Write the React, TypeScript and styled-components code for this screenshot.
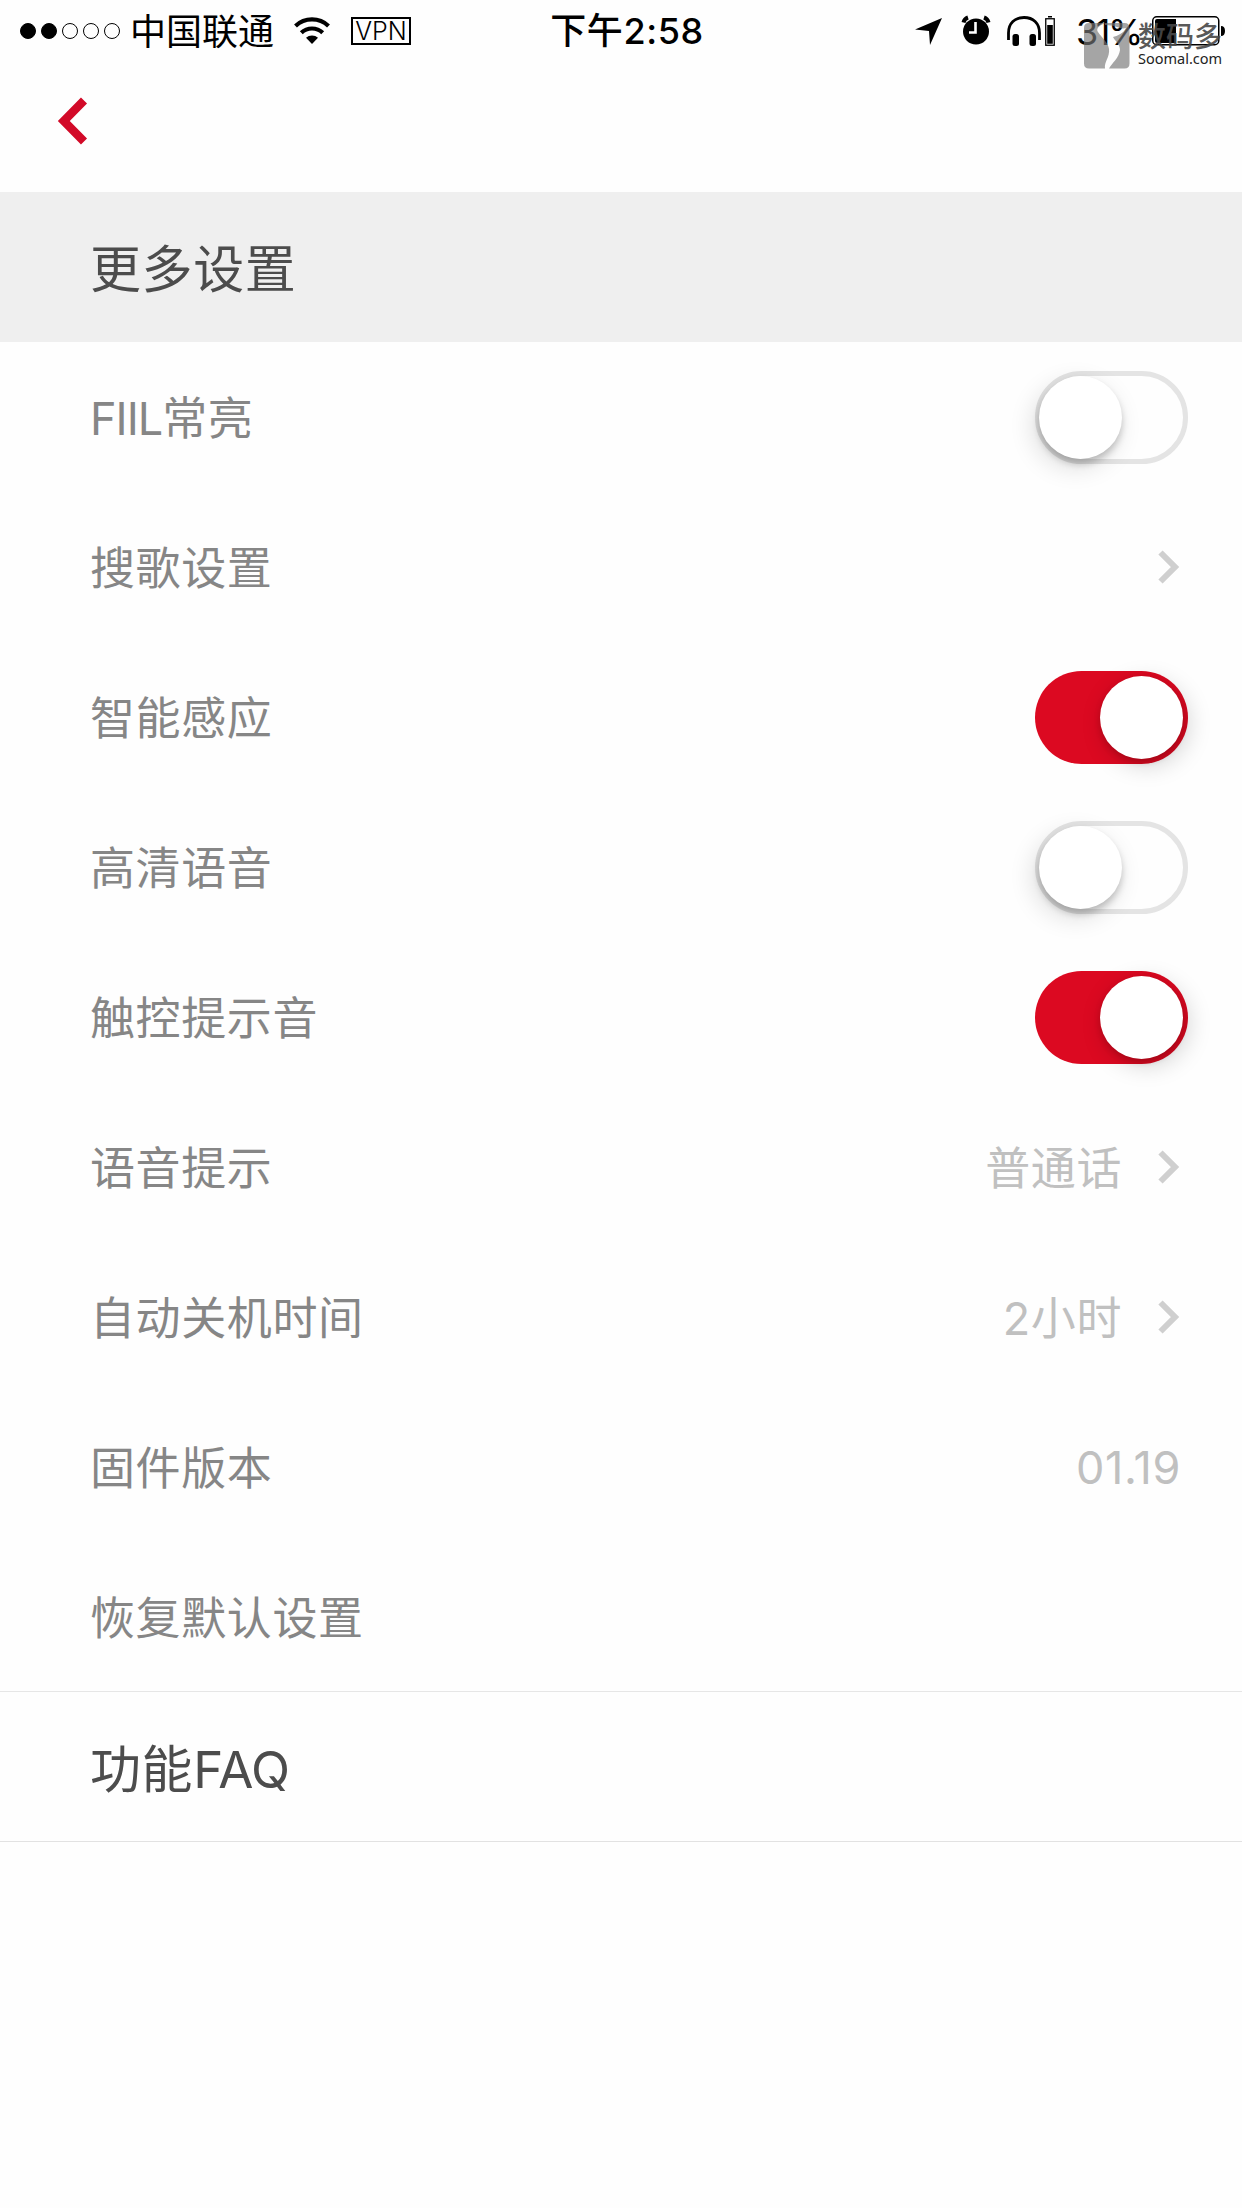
import React from "react";
import styled, { createGlobalStyle, css } from "styled-components";

const Global = createGlobalStyle`
  *, *::before, *::after { box-sizing: border-box; }
  body {
    margin: 0;
    background: #fefefe;
    font-family: Inter, "Noto Sans CJK SC", sans-serif;
  }
`;

const Page = styled.div`
  position: relative;
  width: 1242px;
  min-height: 2208px;
  background: #fefefe;
  overflow: hidden;
`;

const StatusBar = styled.header`
  display: grid;
  grid-template-columns: 531px 1fr 531px;
  align-items: center;
  height: 60px;
  color: #000;
  font-size: 36px;
  line-height: 60px;
  white-space: nowrap;
`;

const StatusGroup = styled.div<{ $end?: boolean }>`
  display: flex;
  align-items: center;
  height: 60px;
  ${(p) =>
    p.$end
      ? css`
          justify-content: flex-end;
          padding-right: 17px;
        `
      : css`
          padding-left: 20px;
        `}
`;

const Signal = styled.div`
  display: flex;
  gap: 5px;
  margin-right: 10px;
`;

const Dot = styled.i<{ $on: boolean }>`
  width: 16px;
  height: 16px;
  border-radius: 50%;
  border: 1px solid #000;
  background: ${(p) => (p.$on ? "#000" : "transparent")};
`;

const Carrier = styled.span`
  width: 164px;
  padding-top: 2px;
`;

const Vpn = styled.span`
  display: flex;
  align-items: center;
  justify-content: center;
  width: 60px;
  height: 28px;
  margin-left: 21px;
  border: 2px solid #000;
  font-size: 25px;
  font-weight: 300;
  line-height: 24px;
`;

const Clock = styled.time`
  padding: 1px 0 0 12px;
  text-align: center;
  font-weight: 500;
  letter-spacing: 0.6px;
`;

const Percent = styled.span`
  width: 76px;
  margin-left: 19px;
  padding-top: 2px;
  letter-spacing: -2.4px;
`;

const NavBar = styled.nav`
  display: flex;
  align-items: center;
  height: 132px;
  padding: 0 0 10px 55px;
`;

const BackButton = styled.button`
  display: flex;
  padding: 0;
  border: 0;
  background: none;
`;

const TitleBar = styled.h1`
  display: flex;
  align-items: center;
  height: 150px;
  margin: 0;
  padding: 0 0 3px 90px;
  background: #efefef;
  color: #4c4c4c;
  font-size: 51px;
  font-weight: 400;
  letter-spacing: 0.6px;
`;

const List = styled.ul`
  margin: 0;
  padding: 0;
  list-style: none;
`;

const Row = styled.li<{ $toggle?: boolean }>`
  display: flex;
  align-items: center;
  height: 150px;
  padding: 0 ${(p) => (p.$toggle ? 54 : 62)}px 0 90px;
  color: #868686;
  font-size: 45px;
  letter-spacing: 0.6px;
`;

const Label = styled.span`
  flex: 1;
  padding-bottom: 4px;
`;

const Latin = styled.span<{ $tight: number }>`
  letter-spacing: -${(p) => p.$tight}px;
`;

const Value = styled.span<{ $plain?: boolean }>`
  margin-right: ${(p) => (p.$plain ? -1 : 0)}px;
  padding-bottom: ${(p) => (p.$plain ? 0 : 4)}px;
  color: #c0c0c0;
`;

const FaqRow = styled.div`
  display: flex;
  align-items: center;
  height: 151px;
  margin-top: -1px;
  padding: 0 0 2px 90px;
  border-top: 1px solid #e6e6e6;
  border-bottom: 1px solid #e2e2e2;
  color: #4c4c4c;
  font-size: 51px;
  letter-spacing: 0.6px;
`;

const Track = styled.button<{ $on: boolean }>`
  display: flex;
  align-items: center;
  justify-content: ${(p) => (p.$on ? "flex-end" : "flex-start")};
  width: 153px;
  height: 93px;
  padding: 0;
  border: 5px solid ${(p) => (p.$on ? "transparent" : "#e4e4e4")};
  border-radius: 47px;
  background: ${(p) => (p.$on ? "#dc0921" : "#fefefe")};
  background-origin: border-box;
`;

const Knob = styled.span<{ $on: boolean }>`
  width: 83px;
  height: 83px;
  margin-left: ${(p) => (p.$on ? 0 : -1)}px;
  border-radius: 50%;
  background: #fff;
  box-shadow: ${(p) =>
    p.$on
      ? "5px 6px 24px rgba(0,0,0,.18), 0 3px 6px rgba(60,0,0,.2)"
      : "-5px 8px 26px rgba(0,0,0,.14), 0 5px 7px rgba(0,0,0,.2)"};
`;

const ChevronIcon = styled.svg`
  display: block;
  margin-left: 36px;
`;

const Watermark = styled.div`
  position: absolute;
  top: 20px;
  left: 1084px;
  display: flex;
  gap: 8px;
`;

const WatermarkText = styled.div`
  display: flex;
  flex-direction: column;
  white-space: nowrap;
`;

const WatermarkName = styled.span`
  height: 30px;
  color: rgba(72, 72, 72, 0.92);
  font-size: 28px;
  font-weight: 500;
  line-height: 35px;
`;

const WatermarkSite = styled.span`
  color: #222;
  font-family: "Noto Sans", sans-serif;
  font-size: 14.5px;
  line-height: 17px;
`;

const Chevron = () => (
  <ChevronIcon width="22" height="34" viewBox="0 0 22 34">
    <path d="M2.5 2.5L17 17L2.5 31.5" fill="none" stroke="#cfcfcf" strokeWidth="6" />
  </ChevronIcon>
);

const Toggle = ({ on }: { on: boolean }) => (
  <Track $on={on} role="switch" aria-checked={on}>
    <Knob $on={on} />
  </Track>
);

const WifiIcon = () => (
  <svg width="36" height="29" viewBox="0 0 36 29">
    <g fill="none" stroke="#000" strokeWidth="4.200">
      <path d="M1.5 10a24 24 0 0 1 33 0" />
      <path d="M7.3 16.800a15.500 15.500 0 0 1 21.4 0" />
    </g>
    <path d="M18 28l-6-6.200a8.700 8.700 0 0 1 12 0z" />
  </svg>
);

const StatusIcons = () => (
  <svg width="142" height="32" viewBox="0 0 142 32">
    <path d="M27 3L15 30L14 16L0 14.500z" />
    <circle cx="61" cy="16.500" r="13" />
    <path
      d="M48.500 7.500a7 7 0 0 1 4.500-5M73.500 7.500a7 7 0 0 0-4.500-5"
      fill="none"
      stroke="#000"
      strokeWidth="4"
    />
    <path d="M60.500 7v10.500h-6.500" fill="none" stroke="#fff" strokeWidth="2.600" />
    <path
      d="M93.500 25V18C93.500 8 100 2.500 109 2.500S124.500 8 124.500 18V25"
      fill="none"
      stroke="#000"
      strokeWidth="2.800"
    />
    <rect x="97.500" y="19" width="6.500" height="12" rx="2.500" />
    <rect x="114.500" y="19" width="6.500" height="12" rx="2.500" />
    <path d="M133 1h4v1.500h-4z" />
    <rect x="130.750" y="3.750" width="8.500" height="26.500" fill="none" stroke="#000" strokeWidth="1.300" />
    <path d="M132.200 10h5.600v18.800h-5.600z" />
  </svg>
);

const BatteryIcon = () => (
  <svg width="73" height="30" viewBox="0 0 73 30">
    <rect x="0.75" y="0.75" width="66" height="28" rx="4" fill="none" stroke="#000" strokeWidth="1.500" />
    <path d="M3 5q0-2 2-2h19v24H5q-2 0-2-2z" />
    <path d="M69 10q4 0 4 5t-4 5z" />
  </svg>
);

const WatermarkLogo = () => (
  <svg width="46" height="49" viewBox="0 0 46 49">
    <path
      d="M5 3H21C14 6 12 9 14 12C18 18 24 22 25 29C26 37 20 42 21 48.500H5q-5 0-5-5V8q0-5 5-5zM21 3H40.500q5 0 5 5V43.500q0 5-5 5H25C28 43 35 38 36 30C36 24 31 21 29 17C33 16 40 13 42 8C36 10 33 5 21 5z"
      fill="#777"
      fillOpacity=".66"
    />
  </svg>
);

type Item = {
  label: string;
  latin?: string;
  on?: boolean;
  value?: string;
  link?: boolean;
};

const items: Item[] = [
  { latin: "FIIL", label: "常亮", on: false },
  { label: "搜歌设置", link: true },
  { label: "智能感应", on: true },
  { label: "高清语音", on: false },
  { label: "触控提示音", on: true },
  { label: "语音提示", value: "普通话", link: true },
  { label: "自动关机时间", value: "2小时", link: true },
  { label: "固件版本", value: "01.19" },
  { label: "恢复默认设置" },
];

export default function App() {
  return (
    <Page lang="zh-CN">
      <Global />
      <StatusBar>
        <StatusGroup>
          <Signal>
            {[true, true, false, false, false].map((on, i) => (
              <Dot key={i} $on={on} />
            ))}
          </Signal>
          <Carrier>中国联通</Carrier>
          <WifiIcon />
          <Vpn>VPN</Vpn>
        </StatusGroup>
        <Clock>下午2:58</Clock>
        <StatusGroup $end>
          <StatusIcons />
          <Percent>31%</Percent>
          <BatteryIcon />
        </StatusGroup>
      </StatusBar>
      <NavBar>
        <BackButton aria-label="返回">
          <svg width="34" height="50" viewBox="0 0 34 50">
            <path d="M29 4.500L8.800 25L29 45.500" fill="none" stroke="#d20a28" strokeWidth="8.500" />
          </svg>
        </BackButton>
      </NavBar>
      <TitleBar>更多设置</TitleBar>
      <List>
        {items.map((item) => (
          <Row key={item.label} $toggle={item.on !== undefined}>
            <Label>
              {item.latin && <Latin $tight={1}>{item.latin}</Latin>}
              {item.label}
            </Label>
            {item.on !== undefined && <Toggle on={item.on} />}
            {item.value && <Value $plain={!item.link}>{item.value}</Value>}
            {item.link && <Chevron />}
          </Row>
        ))}
      </List>
      <FaqRow>
        <span>
          功能<Latin $tight={0.5}>FAQ</Latin>
        </span>
      </FaqRow>
      <Watermark>
        <WatermarkLogo />
        <WatermarkText>
          <WatermarkName>数码多</WatermarkName>
          <WatermarkSite>Soomal.com</WatermarkSite>
        </WatermarkText>
      </Watermark>
    </Page>
  );
}
